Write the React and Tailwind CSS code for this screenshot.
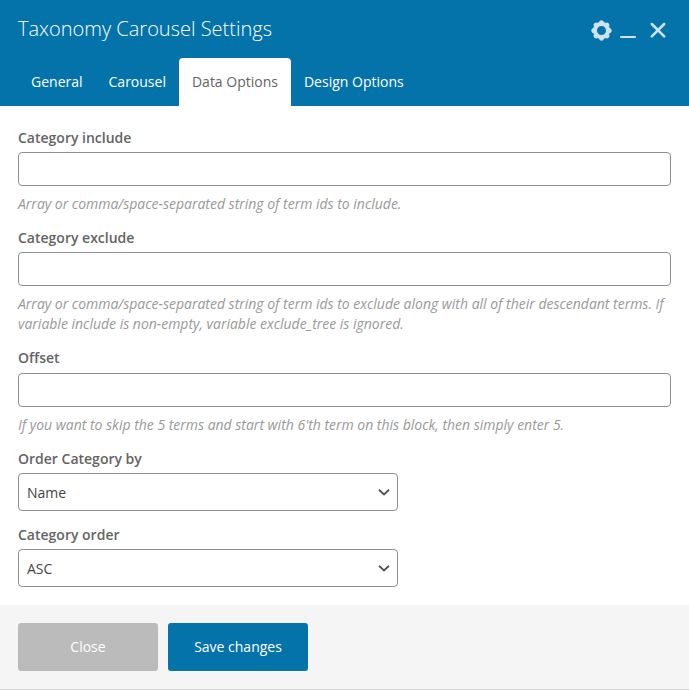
function Field({ label, help, className, inputClass = "mt-1" }) {
  return (
    <div className={className}>
      <label className="block text-sm leading-5 font-semibold text-[#646464]">{label}</label>
      <input type="text" className={`${inputClass} block h-[34px] w-full rounded border border-[#8c8f94] bg-white px-2 text-sm`} />
      <p className="mt-2 text-sm leading-5 tracking-[-0.01px] text-[#999] italic">{help}</p>
    </div>
  );
}

function SelectBox({ label, value, className }) {
  return (
    <div className={className}>
      <div className="text-sm leading-5 font-semibold text-[#646464]">{label}</div>
      <div className="mt-1 flex h-[38px] w-[380px] items-center justify-between rounded border border-[#8c8f94] pr-[7px] pl-2 text-sm text-[#444]">
        <span className="pt-0.5">{value}</span>
        <svg className="h-3 w-3" viewBox="0 0 12 12" fill="none" stroke="#555" strokeWidth="1.9">
          <path d="M1 3.8l5 4.700 5-4.700" />
        </svg>
      </div>
    </div>
  );
}

const teeth = [0, 45, 90, 135, 180, 225, 270, 315];

export default function App() {
  return (
    <div className="flex h-[690px] w-[689px] flex-col overflow-hidden bg-white font-['Open_Sans',sans-serif]">
      <header className="flex h-[106px] flex-col justify-between bg-[#0473aa] text-white">
        <div className="flex h-[58px] items-center justify-between pr-[21px] pl-[18px]">
          <h1 className="text-xl leading-7 font-light">Taxonomy Carousel Settings</h1>
          <div className="flex items-center pt-[2px] text-[#cde3ee]">
            <svg className="h-[21px] w-[21px]" viewBox="-10.5 -10.5 21 21">
              <circle r="6.500" fill="none" stroke="currentColor" strokeWidth="4" />
              {teeth.map((a) => (
                <path key={a} d="M-3 -7.500L-1.800 -9.500Q0 -10.900 1.800 -9.500L3 -7.500z" fill="currentColor" transform={`rotate(${a})`} />
              ))}
            </svg>
            <svg className="ml-2 h-5 w-4" viewBox="0 0 16 20"><path d="M1 17h14" stroke="currentColor" strokeWidth="2" strokeLinecap="round" /></svg>
            <svg className="ml-3 h-5 w-5" viewBox="0 0 20 20" fill="none" stroke="currentColor" strokeWidth="2.500" strokeLinecap="round"><path d="M3.800 4l12.400 12.400M16.200 4l-12.400 12.400" /></svg>
          </div>
        </div>
        <nav className="flex h-12 pl-[18px] text-sm font-medium">
          <a className="flex items-center px-[13px]">General</a>
          <a className="flex items-center px-[13px]">Carousel</a>
          <a className="flex items-center rounded-t bg-white px-[13px] font-normal text-[#646464]">Data Options</a>
          <a className="flex items-center px-[13px]">Design Options</a>
        </nav>
      </header>
      <main className="h-[499px] px-[18px] pt-[22px]">
        <Field label="Category include" help="Array or comma/space-separated string of term ids to include." />
        <Field className="mt-[14px]" label="Category exclude" help="Array or comma/space-separated string of term ids to exclude along with all of their descendant terms. If variable include is non-empty, variable exclude_tree is ignored." />
        <Field className="mt-[14px]" inputClass="mt-[5px]" label="Offset" help="If you want to skip the 5 terms and start with 6'th term on this block, then simply enter 5." />
        <SelectBox className="mt-[14px]" label="Order Category by" value="Name" />
        <SelectBox className="mt-[14px]" label="Category order" value="ASC" />
      </main>
      <footer className="flex h-[85px] gap-[10px] border-b border-[#d5d5d5] bg-[#f5f5f5] px-[18px] pt-[18px] text-sm text-white">
        <button className="h-12 w-[140px] rounded-[3px] bg-[#bbb]">Close</button>
        <button className="h-12 w-[140px] rounded-[3px] bg-[#0473aa] font-medium">Save changes</button>
      </footer>
    </div>
  );
}
